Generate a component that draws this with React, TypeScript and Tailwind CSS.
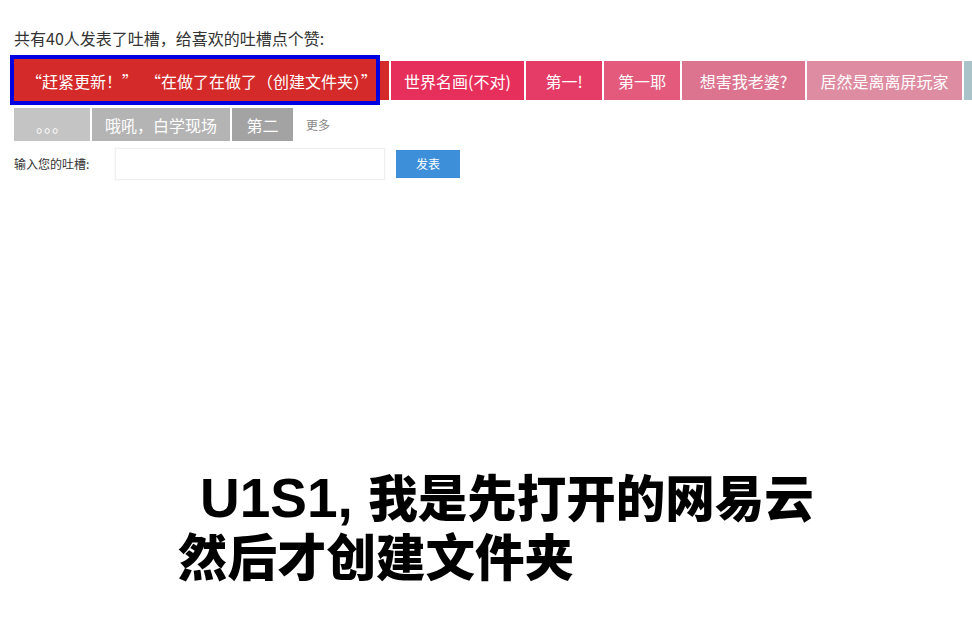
import React from "react";

const row1 = [
  { t: "世界名画(不对)", w: "w-[133px]", bg: "bg-[#e62f5b]" },
  { t: "第一!", w: "w-[76px]", bg: "bg-[#e43c66]" },
  { t: "第一耶", w: "w-[76px]", bg: "bg-[#e35a7d]" },
  { t: "想害我老婆?", w: "w-[123px]", bg: "bg-[#dc7490]" },
  { t: "居然是离离屏玩家", w: "w-[155px]", bg: "bg-[#de8ca2]" },
  { t: "", w: "w-[40px]", bg: "bg-[#a9c3c8]" },
];

const row2 = [
  { t: "。。。", w: "w-[76px]", bg: "bg-[#c4c4c4]" },
  { t: "哦吼，白学现场", w: "w-[138px]", bg: "bg-[#b4b4b4]" },
  { t: "第二", w: "w-[61px]", bg: "bg-[#a3a3a3]" },
];

export default function App() {
  return (
    <div className="relative w-[972px] h-[622px] overflow-hidden bg-white font-['Noto_Sans_CJK_SC',sans-serif]">
      <div className="pl-[14px] pt-[28px]">
        <p className="text-[16px] leading-[20px] text-[#333333]">
          共有40人发表了吐槽，给喜欢的吐槽点个赞:
        </p>

        <div className="mt-[13px] flex h-[39px] gap-[2px] overflow-visible">
          <div className="relative flex w-[375px] shrink-0 items-center justify-center bg-[#d42a2a]">
            <div className="absolute left-[-4px] right-[9px] top-[-6px] bottom-[-5px] border-[4px] border-[#0000e0] bg-[#d42a2a]" />
            <span className="relative whitespace-pre text-[16px] text-white">
              “赶紧更新！”  “在做了在做了（创建文件夹）”
            </span>
          </div>
          {row1.map((r, i) => (
            <div
              key={i}
              className={`flex shrink-0 items-center justify-center text-[16px] text-white ${r.w} ${r.bg}`}
            >
              {r.t}
            </div>
          ))}
        </div>

        <div className="mt-[8px] flex h-[33px] items-center gap-[2px]">
          {row2.map((r, i) => (
            <div
              key={i}
              className={`flex h-full shrink-0 items-center justify-center text-[16px] text-white ${r.w} ${r.bg}`}
            >
              {r.t}
            </div>
          ))}
          <span className="ml-[11px] text-[12px] text-[#888888]">更多</span>
        </div>

        <div className="mt-[7px] flex h-[32px] items-center">
          <span className="w-[101px] text-[12px] text-[#333333]">输入您的吐槽:</span>
          <input
            className="h-[32px] w-[270px] border border-[#efefef] bg-white shadow-[0_0_2px_rgba(0,0,0,0.06)] outline-none"
            type="text"
          />
          <button className="ml-[11px] h-[28px] w-[64px] bg-[#3d8fd9] text-[12px] text-white">
            发表
          </button>
        </div>
      </div>

      <div className="absolute left-[178px] top-[467px] text-[49.5px] font-black leading-[57px] text-black">
        <div className="whitespace-nowrap pl-[22px]">
          <span className="font-['Liberation_Sans','Noto_Sans_CJK_SC',sans-serif] text-[55px] font-bold leading-none">
            U1S1,{" "}
          </span>
          我是先打开的网易云
        </div>
        <div className="whitespace-nowrap">然后才创建文件夹</div>
      </div>
    </div>
  );
}
